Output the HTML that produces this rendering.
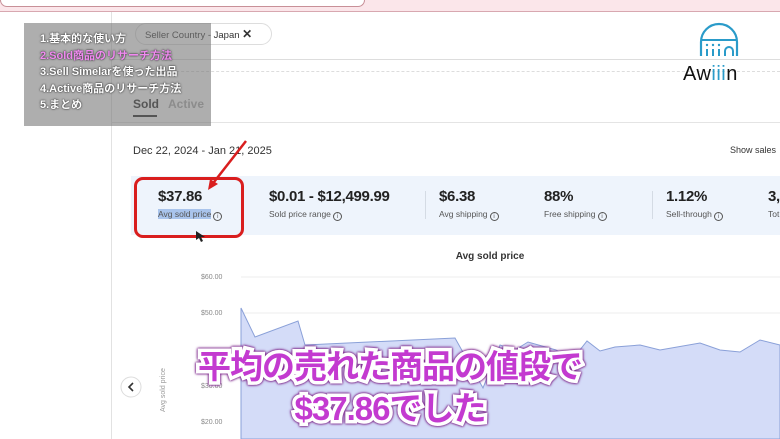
<!DOCTYPE html>
<html><head><meta charset="utf-8"><style>
*{margin:0;padding:0;box-sizing:border-box}
body{width:780px;height:439px;overflow:hidden;background:#fff;font-family:"Liberation Sans","Noto Sans CJK JP",sans-serif;position:relative;color:#111}
.a{position:absolute}
.stat .v{font-size:15px;color:#222;position:absolute;top:0;white-space:nowrap;font-weight:bold;letter-spacing:-.3px}
.stat .l{font-size:8.5px;color:#555;position:absolute;top:21px;white-space:nowrap}
.i{display:inline-block;width:9px;height:9px;border:1px solid #555;border-radius:50%;font-size:6px;text-align:center;line-height:8px;vertical-align:-1px;margin-left:2px}
.sub{position:absolute;left:0;width:780px;text-align:center;font-size:33px;font-weight:bold;color:#c33ad0;-webkit-text-stroke:7px #fff;paint-order:stroke fill;letter-spacing:-1px;filter:drop-shadow(0 0 1px #7a2088) drop-shadow(0 0 1px #7a2088)}
</style></head><body>
<div class="a" style="left:0;top:0;width:780px;height:12px;background:#fbe6ea;border-bottom:1px solid #d8a8b0"></div>
<div class="a" style="left:0;top:0;width:365px;height:7px;border:1px solid #c89098;border-top:none;border-radius:0 0 8px 8px;background:#fff"></div>
<div class="a" style="left:111px;top:12px;width:1px;height:427px;background:#e2e2e2"></div>
<div class="a" style="left:135px;top:23px;width:137px;height:22px;border:1px solid #ddd;border-radius:12px;font-size:9.5px;line-height:20px;padding-left:9px;color:#333;white-space:nowrap">Seller Country - Japan <b style="font-size:12px">✕</b></div>
<div class="a" style="left:111px;top:59px;width:669px;border-top:1px solid #ddd"></div>
<div class="a" style="left:111px;top:71px;width:669px;border-top:1px dashed #ddd"></div>
<div class="a" style="left:133px;top:97px;font-size:12px;font-weight:bold;color:#222">Sold</div>
<div class="a" style="left:168px;top:97px;font-size:12px;font-weight:bold;color:#aaa">Active</div>
<div class="a" style="left:133px;top:115px;width:24px;height:2px;background:#222"></div>
<div class="a" style="left:111px;top:122px;width:669px;border-top:1px solid #e4e4e4"></div>
<div class="a" style="left:24px;top:23px;width:187px;height:103px;background:rgba(120,120,120,.6)"></div>
<div class="a" style="left:40px;top:31px;font-size:11px;line-height:16.5px;color:#fff;font-weight:bold;text-shadow:0 0 2px #333,0 0 1px #333">1.基本的な使い方<br><span style="color:#f08af0">2.Sold商品のリサーチ方法</span><br>3.Sell Simelarを使った出品<br>4.Active商品のリサーチ方法<br>5.まとめ</div>
<svg class="a" style="left:695px;top:22px" width="48" height="36" viewBox="0 0 48 36"><path d="M6 34V20A18 18 0 0 1 42 20V34" fill="none" stroke="#2a9bc9" stroke-width="2.2"/><path d="M6 18H42" stroke="#2a9bc9" stroke-width="2"/><path d="M12 27v7M18 27v7M24 27v7M30 34v-5a4 4 0 0 1 8 0v5" fill="none" stroke="#2a9bc9" stroke-width="2"/><circle cx="12" cy="23" r="1.2" fill="#2a9bc9"/><circle cx="18" cy="23" r="1.2" fill="#2a9bc9"/><circle cx="24" cy="23" r="1.2" fill="#2a9bc9"/></svg>
<div class="a" style="left:683px;top:63px;font-size:20px;color:#111;letter-spacing:.5px">Aw<span style="color:#2a9bc9">iii</span>n</div>
<div class="a" style="left:133px;top:145px;font-size:11px;color:#333">Dec 22, 2024 - Jan 21, 2025</div>
<div class="a" style="left:730px;top:145px;font-size:9px;color:#333">Show sales</div>
<div class="a" style="left:131px;top:176px;width:649px;height:59px;background:#eef4fc"></div>
<div class="a" style="left:425px;top:191px;width:1px;height:28px;background:#d4dbe4"></div>
<div class="a" style="left:652px;top:191px;width:1px;height:28px;background:#d4dbe4"></div>
<div class="a stat" style="left:158px;top:188px"><div class="v">$37.86</div><div class="l"><span style="background:#a9c4ec">Avg sold price</span><span class="i">i</span></div></div>
<div class="a stat" style="left:269px;top:188px"><div class="v">$0.01 - $12,499.99</div><div class="l">Sold price range<span class="i">i</span></div></div>
<div class="a stat" style="left:439px;top:188px"><div class="v">$6.38</div><div class="l">Avg shipping<span class="i">i</span></div></div>
<div class="a stat" style="left:544px;top:188px"><div class="v">88%</div><div class="l">Free shipping<span class="i">i</span></div></div>
<div class="a stat" style="left:666px;top:188px"><div class="v">1.12%</div><div class="l">Sell-through<span class="i">i</span></div></div>
<div class="a stat" style="left:768px;top:188px"><div class="v">3,</div><div class="l">Tot</div></div>
<div class="a" style="left:134px;top:177px;width:110px;height:61px;border:3px solid #d91e1e;border-radius:9px"></div>
<svg class="a" style="left:0;top:0" width="780" height="439"><path d="M246 141L214 182" stroke="#d91e1e" stroke-width="2.5"/><path d="M208 190l2-11 8 5z" fill="#d91e1e"/><path d="M196 231l0 9 3-2 2 4 2-1-2-4 4 0z" fill="#222"/></svg>
<div class="a" style="left:0;top:251px;width:780px;text-align:center;font-size:10px;font-weight:bold;color:#333;padding-left:200px">Avg sold price</div>
<div class="a" style="left:201px;top:274px;font-size:7px;color:#888">$60.00</div>
<div class="a" style="left:201px;top:310px;font-size:7px;color:#888">$50.00</div>
<div class="a" style="left:201px;top:383px;font-size:7px;color:#888">$30.00</div>
<div class="a" style="left:201px;top:419px;font-size:7px;color:#888">$20.00</div>
<div class="a" style="left:160px;top:412px;font-size:7px;color:#999;transform:rotate(-90deg);transform-origin:left top;white-space:nowrap">Avg sold price</div>
<svg class="a" style="left:0;top:0" width="780" height="439">
<path d="M241 277H780M241 313H780M241 386H780M241 422H780" stroke="#eee"/>
<path d="M241 308L255 337L298 321L305 345L455 338L483 388L500 345L515 350L528 342L556 350L572 360L587 341L600 351L615 347L640 345L660 350L700 343L720 350L740 352L760 340L780 345V439H241Z" fill="#d4dcf8" stroke="#8aa0d8" stroke-width="1"/>
<circle cx="131" cy="387" r="10" fill="#fff" stroke="#ddd"/><path d="M133 383l-4 4 4 4" fill="none" stroke="#333" stroke-width="1.6"/>
</svg>
<div class="sub" style="top:340px">平均の売れた商品の値段で</div>
<div class="sub" style="top:382px">$37.86でした</div>
</body></html>
